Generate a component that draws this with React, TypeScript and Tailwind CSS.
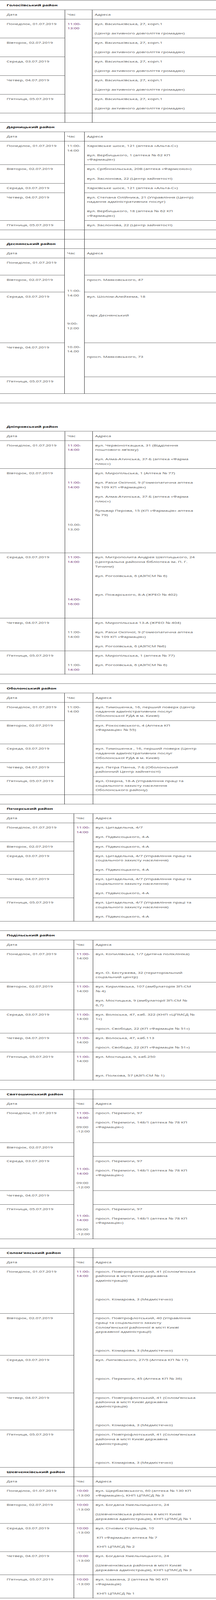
import React from 'react';

// Paragraph: lines split by \n, a line that starts with ~ is the purple-ish link colour, "" = empty paragraph
type Para = string;

type Block =
  | { type: 'title'; text: string; full: boolean; before?: number }
  | { type: 'blank'; full: boolean }
  | { type: 'head' }
  | { type: 'day'; date: string; time?: Para[]; span?: number; addr: Para[] };

type Table = { c1: string; c2: string; first?: boolean; rows: Block[] };

const PN = 'Понеділок, 01.07.2019';
const VT = 'Вівторок, 02.07.2019';
const SR = 'Середа, 03.07.2019';
const CT = 'Четвер, 04.07.2019';
const PT = 'П’ятниця, 05.07.2019';

const holosiiv = ['вул. Васильківська, 27, корп.1', '(Центр активного довголіття громадян)'];
const solomPovitr = 'просп. Повітрофлотський, 41 (Солом’янська\nрайонна в місті Києві державна\nадміністрація)';
const komarova = 'просп. Комарова, 3 (Медмістечко)';
const peremoga = ['просп. Перемоги, 97', 'просп. Перемоги, 148/1 (аптека № 78 КП\n«Фармація»)'];
const tsytadelna = ['вул. Цитадельна, 4/7 (Управління праці та\nсоціального захисту населення)', 'вул. Підвисоцького, 4-А'];

const TABLES: Table[] = [
  {
    c1: 'w-[167px]',
    c2: 'w-[70px]',
    first: true,
    rows: [
      { type: 'title', text: 'Голосіївський район', full: true },
      { type: 'head' },
      { type: 'day', date: PN, time: ['~11:00-\n~13:00'], span: 5, addr: holosiiv },
      { type: 'day', date: VT, addr: holosiiv },
      { type: 'day', date: SR, addr: holosiiv },
      { type: 'day', date: CT, addr: holosiiv },
      { type: 'day', date: PT, addr: holosiiv },
      { type: 'blank', full: false },
    ],
  },
  {
    c1: 'w-[166px]',
    c2: 'w-[51px]',
    rows: [
      { type: 'title', text: 'Дарницький район', full: true },
      { type: 'head' },
      {
        type: 'day',
        date: PN,
        time: ['11:00-\n14:00'],
        span: 5,
        addr: ['Харківське шосе, 121 (аптека «Альта-С»)', 'вул. Вербицького, 1 (аптека № 62 КП\n«Фармація»)'],
      },
      { type: 'day', date: VT, addr: ['вул. Срібнокільська, 20В (аптека «Фармсоюз»)', 'вул. Заслонова, 22 (Центр зайнятості)'] },
      { type: 'day', date: SR, addr: ['Харківське шосе, 121 (аптека «Альта-С»)'] },
      {
        type: 'day',
        date: CT,
        addr: [
          'вул. Степана Олійника, 21 (Управління (Центр)\nнадання адміністративних послуг)',
          'вул. Вербицького, 18 (аптека № 62 КП\n«Фармація»)',
        ],
      },
      { type: 'day', date: PT, addr: ['вул. Заслонова, 22 (Центр зайнятості)'] },
      { type: 'blank', full: false },
      { type: 'title', text: 'Деснянський район', full: false },
      { type: 'head' },
      {
        type: 'day',
        date: PN,
        time: ['', '', '', '11:00-\n14:00', '', '', '9:00-\n12:00', '', '10.00-\n14.00', '', '', '', ''],
        span: 5,
        addr: [],
      },
      { type: 'day', date: VT, addr: ['просп. Маяковського, 47'] },
      { type: 'day', date: SR, addr: ['вул. Шолом-Алейхема, 18', '', 'парк Деснянський'] },
      { type: 'day', date: CT, addr: ['', 'просп. Маяковського, 73'] },
      { type: 'day', date: PT, addr: [] },
    ],
  },
  {
    c1: 'w-[167px]',
    c2: 'w-[71px]',
    rows: [
      { type: 'blank', full: true },
      { type: 'title', text: 'Дніпровський район', full: true, before: 2 },
      { type: 'head' },
      {
        type: 'day',
        date: PN,
        time: ['~11:00-\n~14:00'],
        addr: ['вул. Червоноткацька, 31 (Відділення\nпоштового зв’язку)', 'вул. Алма-Атинська, 37-Б (аптека «Фарма\nплюс»)'],
      },
      {
        type: 'day',
        date: VT,
        time: ['', '~11:00-\n~14:00', '', '', '', '10.00-\n13.00', '', ''],
        addr: [
          'вул. Миропільська, 1 (Аптека № 77)',
          'вул. Раіси Окіпної, 9 (Гомеопатична аптека\n№ 109 КП «Фармація»)',
          'вул. Алма-Атинська, 37-Б (аптека «Фарма\nплюс»)',
          'бульвар Перова, 15 (КП «Фармація» аптека\n№ 79)',
        ],
      },
      {
        type: 'day',
        date: SR,
        time: ['~11:00-\n~14:00', '', '', '', '~14:00-\n~16:00', ''],
        addr: [
          'вул. Митрополита Андрея Шептицького, 24\n(Центральна районна бібліотека ім. П. Г.\nТичини)',
          'вул. Рогозівська, 6 (АЗПСМ № 6)',
          '',
          'вул. Пожарського, 8-А (ЖРЕО № 402)',
        ],
      },
      {
        type: 'day',
        date: CT,
        time: ['', '11:00-\n14:00'],
        addr: [
          'вул. Миропільська 13-А (ЖРЕО № 404)',
          'вул. Раіси Окіпної, 9 (Гомеопатична аптека\n№ 109 КП «Фармація»)',
          'вул. Рогозівська, 6 (АЗПСМ №6)',
        ],
      },
      {
        type: 'day',
        date: PT,
        time: ['', '11:00-\n~14:00'],
        addr: ['вул. Миропільська, 1 (аптека № 77)', 'вул. Рогозівська, 6 (АЗПСМ № 6)'],
      },
      { type: 'blank', full: true },
    ],
  },
  {
    c1: 'w-[166px]',
    c2: 'w-[73px]',
    rows: [
      { type: 'title', text: 'Оболонський район', full: true },
      { type: 'head' },
      {
        type: 'day',
        date: PN,
        time: ['11:00-\n14:00'],
        span: 5,
        addr: ['вул. Тимошенка, 16, перший поверх (Центр\nнадання адміністративних послуг\nОболонської РДА в м. Києві)'],
      },
      { type: 'day', date: VT, addr: ['вул. Рокосовського, 4 (Аптека КП\n«Фармація» № 55)', ''] },
      {
        type: 'day',
        date: SR,
        addr: ['вул. Тимошенка , 16, перший поверх (Центр\nнадання адміністративних послуг\nОболонської РДА в м. Києві)'],
      },
      { type: 'day', date: CT, addr: ['вул. Петра Панча, 7-Б (Оболонський\nрайонний Центр зайнятості)'] },
      {
        type: 'day',
        date: PT,
        addr: ['вул. Озерна, 18-А (Управління праці та\nсоціального захисту населення\nОболонського району)'],
      },
      { type: 'blank', full: false },
    ],
  },
  {
    c1: 'w-[190px]',
    c2: 'w-[49px]',
    rows: [
      { type: 'title', text: 'Печерський район', full: true },
      { type: 'head' },
      { type: 'day', date: PN, time: ['~11:00-\n~14:00'], span: 5, addr: ['вул. Цитадельна, 4/7', 'вул. Підвисоцького, 4-А'] },
      { type: 'day', date: VT, addr: ['вул. Підвисоцького, 4-А'] },
      { type: 'day', date: SR, addr: tsytadelna },
      { type: 'day', date: CT, addr: tsytadelna },
      { type: 'day', date: PT, addr: tsytadelna },
      { type: 'blank', full: true },
      { type: 'title', text: 'Подільський район', full: true },
      { type: 'head' },
      {
        type: 'day',
        date: PN,
        time: ['~11:00-\n14:00'],
        addr: ['вул. Копилівська, 1/7 (дитяча поліклініка)', '', 'вул. О. Бестужева, 32 (територіальний\nсоціальний центр)'],
      },
      {
        type: 'day',
        date: VT,
        time: ['~11:00-\n14:00'],
        addr: ['вул. Кирилівська, 107 (амбулаторія ЗП-СМ\n№ 4)', 'вул. Мостицька, 9 (амбулаторії ЗП-СМ №\n6,7)'],
      },
      {
        type: 'day',
        date: SR,
        time: ['~11:00-\n14:00'],
        addr: ['вул. Волоська, 47, каб. 322 (КНП «ЦПМСД №\n1»)', 'просп. Свободи, 22 (КП «Фармація № 51»)'],
      },
      {
        type: 'day',
        date: CT,
        time: ['~11:00-\n14:00'],
        addr: ['вул. Волоська, 47, каб.113', 'просп. Свободи, 22 (КП «Фармація № 51»)'],
      },
      {
        type: 'day',
        date: PT,
        time: ['~11:00-\n14:00'],
        addr: ['вул. Мостицька, 9, каб.250', '', 'вул. Полкова, 57 (АЗП-СМ № 1)'],
      },
      { type: 'blank', full: true },
      { type: 'title', text: 'Святошинський район', full: false },
      { type: 'head' },
      {
        type: 'day',
        date: PN,
        time: [
          '~11:00-\n~14:00',
          '09:00\n-12:00',
          '',
          '',
          '',
          '~11:00-\n~14:00',
          '09:00\n-12:00',
          '',
          '',
          '~11:00-\n~14:00',
          '09:00\n-12:00',
        ],
        span: 5,
        addr: peremoga,
      },
      { type: 'day', date: VT, addr: [] },
      { type: 'day', date: SR, addr: peremoga },
      { type: 'day', date: CT, addr: [] },
      { type: 'day', date: PT, addr: peremoga },
      { type: 'blank', full: true },
      { type: 'title', text: 'Солом\'янський район', full: false },
      { type: 'head' },
      { type: 'day', date: PN, time: ['~11:00-\n~14:00'], span: 5, addr: [solomPovitr, '', komarova, ''] },
      {
        type: 'day',
        date: VT,
        addr: [
          'просп. Повітрофлотський, 40 (Управління\nпраці та соціального захисту\nСолом’янської районної в місті Києві\nдержавної адміністрації)',
          '',
          komarova,
        ],
      },
      {
        type: 'day',
        date: SR,
        addr: ['вул. Липківського, 27/5 (Аптека КП № 17)', '', 'просп. Перемоги, 45 (Аптека КП № 36)', ''],
      },
      { type: 'day', date: CT, addr: [solomPovitr, '', komarova] },
      { type: 'day', date: PT, addr: [solomPovitr, '', komarova] },
      { type: 'title', text: 'Шевченківський район', full: false },
      { type: 'head' },
      {
        type: 'day',
        date: PN,
        time: ['~10:00\n-13:00'],
        addr: ['вул. Щербаківського, 60 (аптека № 130 КП\n«Фармація»), КНП ЦПМСД № 3'],
      },
      {
        type: 'day',
        date: VT,
        time: ['~10:00\n-13:00'],
        addr: ['вул. Богдана Хмельницького, 24', '(Шевченківська районна в місті Києві\nдержавна адміністрація), КНП ЦПМСД № 1'],
      },
      {
        type: 'day',
        date: SR,
        time: ['~10:00\n-13:00'],
        addr: ['вул. Січових Стрільців, 10', '\u00a0КП «Фармація» аптека № 7', '\u00a0КНП ЦПМСД № 2'],
      },
      {
        type: 'day',
        date: CT,
        time: ['~10:00\n-13:00'],
        addr: ['вул. Богдана Хмельницького, 24', '(Шевченківська районна в місті Києві\nдержавна адміністрація), КНП ЦПМСД № 3'],
      },
      {
        type: 'day',
        date: PT,
        time: ['~10:00\n-13:00'],
        addr: ['вул. Ісаакяна, 2 (аптека № 90 КП\n«Фармація)', '\u00a0КНП ЦПМСД № 1'],
      },
    ],
  },
];

const Paras = ({ items }: { items: Para[] }) => (
  <>
    {items.map((p, i) => (
      <p key={i} className={i > 0 ? 'mt-[19.15px]' : ''}>
        {p === ''
          ? '\u00a0'
          : p.split('\n').map((ln, j) => (
              <React.Fragment key={j}>
                {j > 0 && <br />}
                {ln.startsWith('~') ? <span className="text-[#6a2a6e]">{ln.slice(1)}</span> : ln}
              </React.Fragment>
            ))}
      </p>
    ))}
  </>
);

// fonts are set on every cell: tables may not inherit them from the page
const cell =
  "align-top pt-[8.9px] pb-[9.25px] border-b border-[#222] whitespace-nowrap font-['Open_Sans',sans-serif] text-[12px] leading-[17.85px] text-[#555] font-normal";
const col1 = `${cell} pl-[17px] pr-[6px] border-r`;
const col2 = `${cell} px-[6px] border-r`;
const col3 = `${cell} px-[6px]`;

const Row = ({ b }: { b: Block }) => {
  switch (b.type) {
    case 'title':
      return b.full ? (
        <tr>
          <td colSpan={3} className={`${cell} pl-[17px] !font-bold !text-[#111]`}>
            <Paras items={[...Array(b.before ?? 0).fill(''), b.text]} />
          </td>
        </tr>
      ) : (
        <tr>
          <td className={`${col1} !font-bold !text-[#111]`}>{b.text}</td>
          <td className={col2}></td>
          <td className={col3}></td>
        </tr>
      );
    case 'blank':
      return b.full ? (
        <tr>
          <td colSpan={3} className={`${cell} pl-[17px]`}>{'\u00a0'}</td>
        </tr>
      ) : (
        <tr>
          <td className={col1}>{'\u00a0'}</td>
          <td className={col2}></td>
          <td className={col3}></td>
        </tr>
      );
    case 'head':
      return (
        <tr>
          <td className={col1}>Дата</td>
          <td className={col2}>Час</td>
          <td className={col3}>Адреса</td>
        </tr>
      );
    default:
      return (
        <tr>
          <td className={col1}>{b.date}</td>
          {b.time && (
            <td className={col2} rowSpan={b.span ?? 1}>
              <Paras items={b.time} />
            </td>
          )}
          <td className={col3}>
            <Paras items={b.addr} />
          </td>
        </tr>
      );
  }
};

export default function App() {
  // the photographed window stops at 4096px, so the 6302px page is drawn squeezed into it
  return (
    <div className="h-[4096px] w-[554px] overflow-hidden bg-white">
      <div className="h-[6302px] w-[554px] origin-top scale-y-[0.64995] bg-white pt-px">
        {TABLES.map((t, i) => (
          <table
            key={i}
            className={`w-[554px] table-fixed border-separate border-spacing-0 ${t.first ? 'border-t border-[#222]' : ''}`}
          >
            <colgroup>
              <col className={t.c1} />
              <col className={t.c2} />
              <col />
            </colgroup>
            <tbody>
              {t.rows.map((b, j) => (
                <Row key={j} b={b} />
              ))}
            </tbody>
          </table>
        ))}
      </div>
    </div>
  );
}
